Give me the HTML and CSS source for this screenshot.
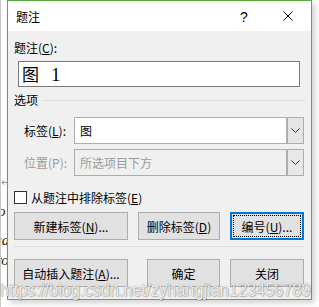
FILE: index.html
```html
<!DOCTYPE html>
<html lang="zh-CN">
    <head>
        <meta charset="UTF-8" />
        <title>题注</title>
        <link rel="stylesheet" href="styles.css">
    </head>
    <body>
        <div class="desk">
            <div class="behind">
                <span class="pilcrow">↵</span>
                <span class="frag f1">o</span>
                <span class="frag f2">ca</span>
                <span class="frag f3">ro</span>
            </div>
            <div class="dialog">
                <div class="titlebar">
                    <span class="title">题注</span>
                    <span class="help">?</span>
                    <svg class="close" width="10" height="10" viewBox="0 0 10 10">
                        <path d="M0.5 0.5L9.5 9.5M9.5 0.5L0.5 9.5" stroke="#000" stroke-width="1" fill="none" />
                    </svg>
                </div>
                <div class="body">
                    <div class="lbl">题注(<u>C</u>):</div>
                    <div class="caption-box">图<span class="num">1</span></div>

                    <div class="group">
                        <span>选项</span>
                        <span class="rule"></span>
                    </div>

                    <div class="field">
                        <span class="flbl">标签(<u>L</u>):</span>
                        <div class="combo">
                            <span class="value">图</span>
                            <span class="drop">
                                <svg width="9" height="5" viewBox="0 0 9 5"><path d="M0.5 0.5L4.5 4.5L8.5 0.5" stroke="#333" fill="none" /></svg>
                            </span>
                        </div>
                    </div>
                    <div class="field disabled">
                        <span class="flbl">位置(P):</span>
                        <div class="combo">
                            <span class="value">所选项目下方</span>
                            <span class="drop">
                                <svg width="9" height="5" viewBox="0 0 9 5"><path d="M0.5 0.5L4.5 4.5L8.5 0.5" stroke="#333" fill="none" /></svg>
                            </span>
                        </div>
                    </div>

                    <label class="check"><span class="box"></span>从题注中排除标签(<u>E</u>)</label>

                    <div class="btns">
                        <button class="btn w-new">新建标签(<u>N</u>)...</button>
                        <button class="btn w-del">删除标签(<u>D</u>)</button>
                        <button class="btn w-num focus"><span class="dots">编号(<u>U</u>)...</span></button>
                    </div>
                    <div class="sep"></div>
                    <div class="btns">
                        <button class="btn w-new">自动插入题注(<u>A</u>)...</button>
                        <button class="btn w-ok">确定</button>
                        <button class="btn w-num">关闭</button>
                    </div>
                </div>
            </div>
            <div class="watermark">https://blog.csdn.net/zyhangjian123456789</div>
        </div>
    </body>
</html>
```

FILE: styles.css
```css
html,
body {
    margin: 0;
    padding: 0;
    background: #fff;
}
body {
    width: 319px;
    height: 307px;
    overflow: hidden;
    font-family: "Noto Sans CJK SC", "Liberation Sans", sans-serif;
    font-size: 12px;
    color: #000;
}
u {
    text-decoration: underline;
    text-underline-offset: 1px;
}
.desk {
    position: relative;
    display: flex;
    height: 307px;
}
.behind {
    width: 7px;
    flex: none;
    display: flex;
    flex-direction: column;
    overflow: hidden;
    border-left: 1px solid #c8c8c8;
    box-sizing: border-box;
    font-family: "Liberation Serif", serif;
    font-style: italic;
    font-size: 15px;
    color: #222;
}
.pilcrow {
    margin-top: 175px;
    color: #9a9a9a;
    font-style: normal;
    font-size: 11px;
    line-height: 14px;
}
.frag {
    line-height: 16px;
    margin-left: -3px;
}
.f1 { margin-top: 14px; }
.f2 { margin-top: 13px; margin-left: -6px; }
.f3 { margin-top: 4px; margin-left: -5px; }

.dialog {
    width: 305px;
    height: 300px;
    flex: none;
    box-sizing: border-box;
    border: 1px solid #55ad3b;
    background: #f0f0f0;
    box-shadow: 3px 3px 6px rgba(0, 0, 0, 0.18);
}
.titlebar {
    height: 30px;
    background: #fff;
    display: flex;
    align-items: center;
    padding-left: 8px;
}
.title {
    flex: 1;
    line-height: 16px;
    margin-top: 1px;
}
.help {
    font-family: "Liberation Sans", sans-serif;
    font-size: 14px;
    width: 12px;
    margin-right: 31px;
    margin-top: 1px;
}
.close {
    margin-right: 18px;
}
.body {
    padding: 9px 0 0 6px;
}
.lbl {
    line-height: 16px;
}
.caption-box {
    margin: 5px 0 0 4px;
    width: 282px;
    height: 26px;
    box-sizing: border-box;
    border: 1px solid #7a7a7a;
    background: #fff;
    font-size: 17px;
    line-height: 24px;
    padding-left: 3px;
}
.num {
    font-family: "Liberation Serif", serif;
    font-size: 19px;
    margin-left: 12px;
}
.group {
    display: flex;
    align-items: center;
    margin-top: 5px;
    line-height: 16px;
}
.rule {
    flex: none;
    width: 262px;
    height: 1px;
    background: #dcdcdc;
    margin-left: 5px;
    margin-top: 1px;
}
.field {
    display: flex;
    align-items: center;
    margin-top: 9px;
}
.field + .field {
    margin-top: 5px;
}
.flbl {
    width: 50px;
    padding-left: 10px;
}
.combo {
    width: 230px;
    height: 27px;
    box-sizing: border-box;
    border: 1px solid #adadad;
    background: #fff;
    display: flex;
}
.value {
    flex: 1;
    padding-left: 5px;
    line-height: 25px;
}
.drop {
    width: 17px;
    box-sizing: border-box;
    border-left: 2px solid #adadad;
    background: #e5e5e5;
    display: flex;
    align-items: center;
    justify-content: center;
}
.disabled {
    color: #9b9b9b;
}
.disabled .combo {
    background: #f0f0f0;
}
.disabled .drop {
    background: #e8e8e8;
}
.check {
    display: flex;
    align-items: center;
    margin-top: 15px;
    height: 13px;
    line-height: 13px;
}
.box {
    width: 13px;
    height: 13px;
    box-sizing: border-box;
    border: 1px solid #333;
    background: #fff;
    margin-right: 4px;
}
.btns {
    display: flex;
    margin-top: 8px;
}
.btn {
    height: 28px;
    box-sizing: border-box;
    border: 1px solid #adadad;
    background: #e1e1e1;
    font-family: inherit;
    font-size: 12px;
    color: #000;
    padding: 0;
    display: flex;
    align-items: center;
    justify-content: center;
}
.w-new {
    width: 114px;
}
.w-del {
    width: 82px;
    margin-left: 10px;
}
.w-ok {
    width: 73px;
    margin-left: 19px;
}
.w-num {
    width: 74px;
    margin-left: 10px;
}
.focus {
    border: 2px solid #0078d7;
    padding: 1px;
}
.dots {
    flex: 1;
    align-self: stretch;
    display: flex;
    align-items: center;
    justify-content: center;
    border: 1px dotted #000;
}
.sep {
    margin-top: 6px;
    width: 290px;
    height: 1px;
    background: #dcdcdc;
}
.sep + .btns {
    margin-top: 12px;
}
.watermark {
    position: absolute;
    left: 0;
    top: 280px;
    font-family: "Liberation Sans", sans-serif;
    font-size: 19px;
    line-height: 20px;
    color: rgba(255, 255, 255, 0.9);
    text-shadow: 0 0 1px rgba(0, 0, 0, 0.55), 1px 1px 1px rgba(0, 0, 0, 0.2);
    transform: scaleX(0.86);
    transform-origin: left top;
    white-space: nowrap;
}
```
